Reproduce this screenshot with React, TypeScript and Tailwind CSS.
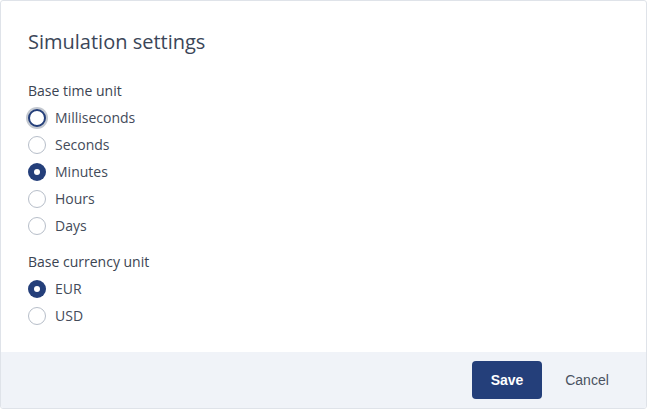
const timeUnits = ["Milliseconds", "Seconds", "Minutes", "Hours", "Days"];
const currencies = ["EUR", "USD"];

function Radio({ label, checked, focused }: { label: string; checked?: boolean; focused?: boolean }) {
  return (
    <label className="flex h-[27px] items-center gap-[9px] text-[14px] text-[#434b5a]">
      {checked ? (
        <span className="flex h-[18px] w-[18px] items-center justify-center rounded-full bg-[#243f7a]">
          <span className="h-[6px] w-[6px] rounded-full bg-white" />
        </span>
      ) : focused ? (
        <span className="h-[18px] w-[18px] rounded-full border-2 border-[#243f7a] bg-white ring-2 ring-[#c3c8d0]" />
      ) : (
        <span className="h-[18px] w-[18px] rounded-full border border-[#b7bec9] bg-white" />
      )}
      <span>{label}</span>
    </label>
  );
}

export default function App() {
  return (
    <div
      className="flex h-[409px] w-[647px] flex-col overflow-hidden rounded-[3px] border border-[#dfe3e9] bg-white"
      style={{ fontFamily: '"Open Sans", "Noto Sans", sans-serif' }}
    >
      <div className="flex-1 px-[27px] pt-[27px]">
        <h2 className="text-[20px] leading-[28px] text-[#3b4658]">Simulation settings</h2>

        {/* Time unit */}
        <p className="mt-[25px] text-[14px] leading-[20px] text-[#3b4452]">Base time unit</p>
        <div className="mt-[3px] flex flex-col">
          {timeUnits.map((u) => (
            <Radio key={u} label={u} checked={u === "Minutes"} focused={u === "Milliseconds"} />
          ))}
        </div>

        {/* Currency */}
        <p className="mt-[13px] text-[14px] leading-[20px] text-[#3b4452]">Base currency unit</p>
        <div className="mt-[3px] flex flex-col">
          {currencies.map((c) => (
            <Radio key={c} label={c} checked={c === "EUR"} />
          ))}
        </div>
      </div>

      <div
        className="flex h-[56px] shrink-0 items-center justify-end gap-[10px] bg-[#f0f3f8] pr-[24px]"
        style={{ fontFamily: '"Liberation Sans", Arial, sans-serif' }}
      >
        <button className="h-[38px] w-[70px] rounded-[4px] bg-[#243f7a] text-[14px] font-bold text-white">
          Save
        </button>
        <button className="h-[38px] w-[70px] rounded-[4px] text-[14px] text-[#4a5261]">Cancel</button>
      </div>
    </div>
  );
}
